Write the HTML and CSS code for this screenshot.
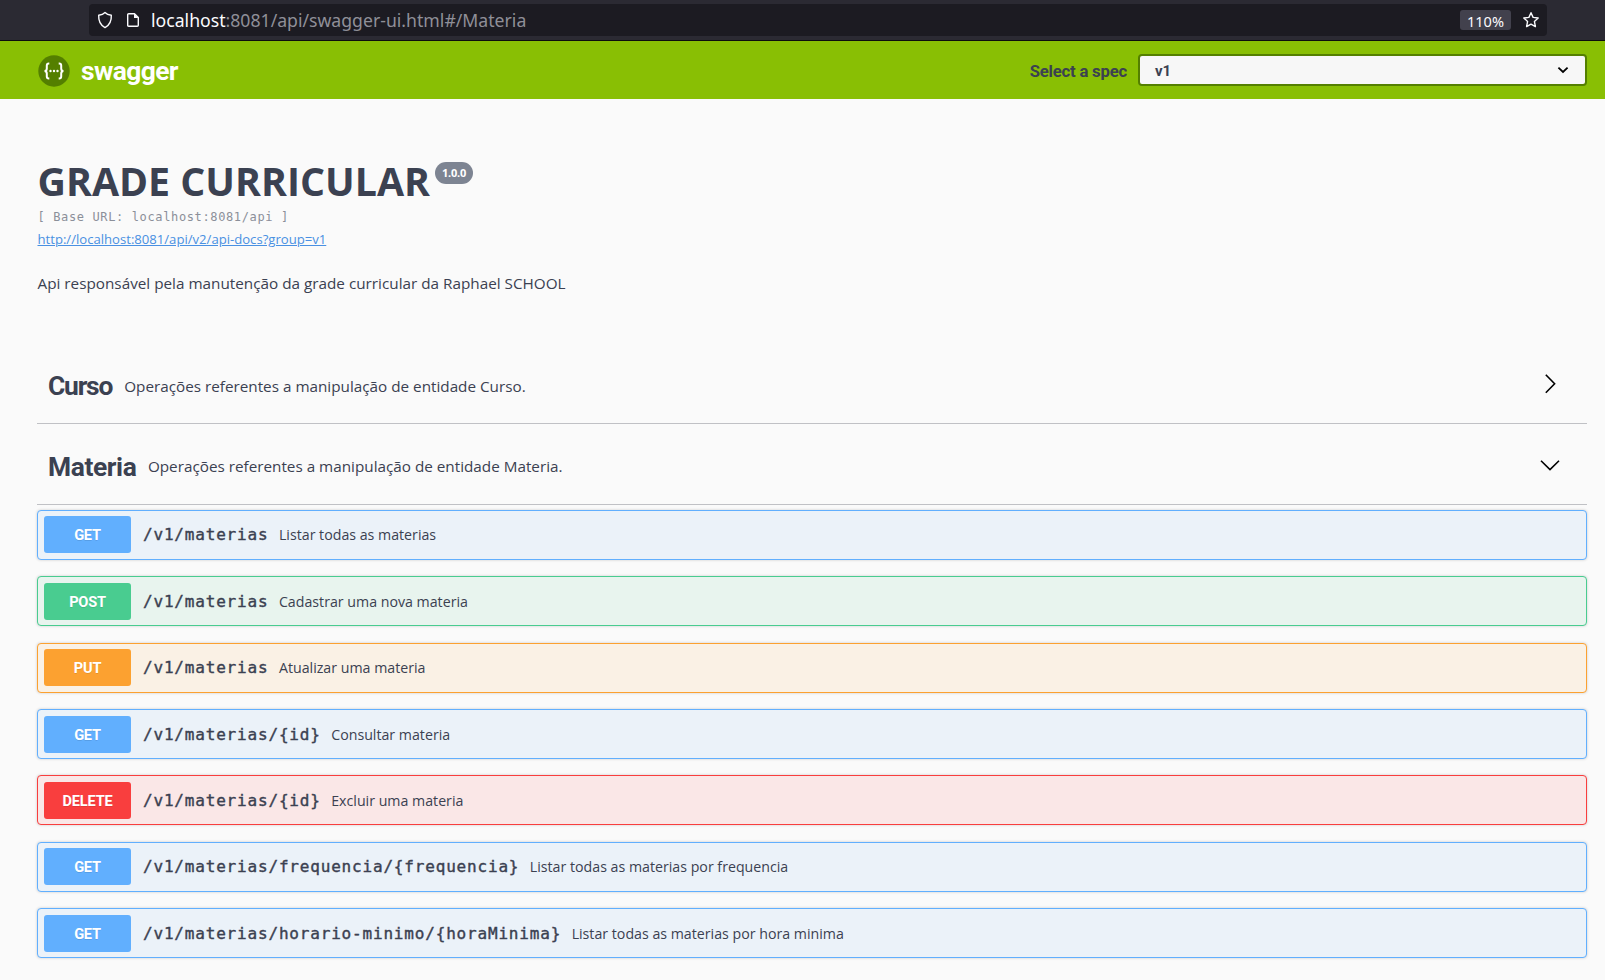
FILE: index.html
```html
<!DOCTYPE html>
<html lang="pt-BR">
<head>
<meta charset="utf-8">
<title>Swagger UI</title>
<link rel="stylesheet" href="styles.css">
</head>
<body>
<div class="chrome">
  <div class="urlbar">
    <svg class="shield" width="16" height="18" viewBox="0 0 16 18"><path d="M8 1.4C9.6 3 11.8 3.8 14.3 4.2c.3 5-1.300 9.600-6.300 12.400C3 13.800 1.400 9.200 1.700 4.200 4.200 3.800 6.400 3 8 1.400z"/></svg>
    <svg class="doc" width="14" height="16" viewBox="0 0 14 16"><path d="M2.700 1.700h5.800l3.800 3.800v7.800q0 1-1 1H2.700q-1 0-1-1V2.700q0-1 1-1z"/><path class="fold" d="M8 1.500V6h4.500z"/></svg>
    <span class="url"><b>localhost</b>:8081/api/swagger-ui.html#/Materia</span>
    <span class="zoom">110%</span>
    <svg class="star" width="18" height="18" viewBox="0 0 18 18"><path d="M9 1.700l2.100 4.700 5.100.6-3.800 3.400 1 5.200L9 13.100l-4.400 2.500 1-5.200L1.800 7l5.100-.6z"/></svg>
  </div>
</div>
<header class="topbar">
  <svg class="logo" width="32" height="32" viewBox="0 0 32 32"><circle cx="16" cy="16" r="15.700"/><path d="M11.300 8.500h-.5q-2 0-2 2v3q0 2.500-2.300 2.500 2.300 0 2.300 2.500v3q0 2 2 2h.5M20.700 8.500h.5q2 0 2 2v3q0 2.500 2.300 2.500-2.300 0-2.300 2.500v3q0 2-2 2h-.5"/><g><circle cx="12.500" cy="16" r="1.200"/><circle cx="16" cy="16" r="1.200"/><circle cx="19.500" cy="16" r="1.200"/></g></svg>
  <span class="brand">swagger</span>
  <span class="label">Select a spec</span>
  <div class="select"><span>v1</span><svg width="12" height="8" viewBox="0 0 12 8"><path d="M1.400 1.600L6 5.900l4.600-4.300"/></svg></div>
</header>
<main>
  <section class="info">
    <h1>GRADE CURRICULAR<span class="version">1.0.0</span></h1>
    <div class="base">[ Base URL: localhost:8081/api ]</div>
    <div class="link"><a href="#">http://localhost:8081/api/v2/api-docs?group=v1</a></div>
    <p>Api responsável pela manutenção da grade curricular da Raphael SCHOOL</p>
  </section>
  <section class="tag curso"><h2>Curso</h2><span>Operações referentes a manipulação de entidade Curso.</span><svg width="20" height="20" viewBox="0 0 20 20"><path d="M5.800.8L14.600 9.800 5.800 18.800"/></svg></section>
  <section class="tag materia"><h2>Materia</h2><span>Operações referentes a manipulação de entidade Materia.</span><svg width="20" height="20" viewBox="0 0 20 20"><path d="M1 5.800L10 14.600 19 5.800"/></svg></section>
  <div class="ops">
    <div class="op get"><b>GET</b><code>/v1/materias</code><span>Listar todas as materias</span></div>
    <div class="op post"><b>POST</b><code>/v1/materias</code><span>Cadastrar uma nova materia</span></div>
    <div class="op put"><b>PUT</b><code>/v1/materias</code><span>Atualizar uma materia</span></div>
    <div class="op get"><b>GET</b><code>/v1/materias/{id}</code><span>Consultar materia</span></div>
    <div class="op delete"><b>DELETE</b><code>/v1/materias/{id}</code><span>Excluir uma materia</span></div>
    <div class="op get"><b>GET</b><code>/v1/materias/frequencia/{frequencia}</code><span>Listar todas as materias por frequencia</span></div>
    <div class="op get"><b>GET</b><code>/v1/materias/horario-minimo/{horaMinima}</code><span>Listar todas as materias por hora minima</span></div>
  </div>
</main>
</body>
</html>
```
FILE: styles.css
```css
* { box-sizing: border-box; }
body { margin: 0; height: 980px; overflow: hidden; background: #fafafa; color: #3b4151; font-family: "Open Sans", sans-serif; }
svg { display: block; flex: none; fill: none; }
h1, h2, p { margin: 0; }

.chrome { height: 41px; padding: 4px 58px 0 89px; background: #2b2a33; border-bottom: 1px solid #0c0c0d; }
.urlbar { height: 32px; display: flex; align-items: center; padding: 0 7px 0 8px; border-radius: 4px; background: #1c1b22; color: #fbfbfe; }
.urlbar path { stroke: #fbfbfe; stroke-width: 1.4; stroke-linejoin: round; }
.urlbar .fold { fill: #fbfbfe; stroke: none; }
.doc { margin-left: 13px; }
.url { margin-left: 11px; font: 17.65px/32px "Noto Sans", sans-serif; color: #8f8f98; white-space: nowrap; }
.url b { font-weight: 400; color: #fbfbfe; }
.zoom { margin-left: auto; width: 51px; height: 20px; border-radius: 3px; background: #42414d; font: 14.5px/22px "Noto Sans", sans-serif; text-align: center; }
.star { margin-left: 11px; }

.topbar { height: 58px; display: flex; align-items: center; padding: 0 18px 0 38px; background: #89bf04; font-family: Roboto, sans-serif; font-weight: 700; }
.logo > circle { fill: #547f00; }
.logo path { stroke: #fff; stroke-width: 2; }
.logo g { fill: #fff; }
.logo { margin-top: 2px; }
.brand { margin: 2px 0 0 11px; font-size: 26.400px; letter-spacing: -.6px; line-height: 36px; color: #fff; }
.label { margin: 2px 0 0 auto; font-size: 16.700px; letter-spacing: -.2px; }
.select { display: flex; align-items: center; justify-content: space-between; width: 449px; height: 32px; margin-left: 11px; padding: 0 16px 0 15px; border: 2px solid #547f00; border-radius: 4px; background: #f7f7f7; font-size: 15px; }
.select span { padding-top: 1px; }
.select path { stroke: #000; stroke-width: 1.800; }

main { padding: 0 18px 0 37px; }
.info { height: 244px; padding: 55px 0 0 .5px; }
.info h1 { display: flex; align-items: flex-start; height: 54px; font-size: 39.3px; line-height: 54px; }
.version { width: 38px; height: 22px; margin: 8px 0 0 5px; border-radius: 11px; background: #7d8492; color: #fff; font-size: 11px; line-height: 22px; text-align: center; letter-spacing: -.2px; }
.base { height: 18px; font: 12px/18px "DejaVu Sans Mono", monospace; letter-spacing: .63px; color: #8b8f99; }
.link { margin-top: 4px; font-size: 13.12px; line-height: 18px; }
.link a { color: #4990e2; }
.info p { margin-top: 24px; font-size: 15.290px; line-height: 22px; }

.tag { height: 81px; display: flex; align-items: flex-start; padding: 24px 27px 0 11px; border-bottom: 1px solid #c0c1c5; }
.tag h2 { margin-top: 1px; font-family: Roboto, sans-serif; font-size: 26.4px; line-height: 36px; }
.curso h2 { letter-spacing: -1.2px; }
.materia h2 { letter-spacing: -.4px; }
.tag span { margin: 8px 0 0 12px; font-size: 15.280px; line-height: 22px; }
.materia span { margin: 7px 0 0 11.5px; }
.tag svg { margin: 7px 0 0 auto; }
.tag path { stroke: #000; stroke-width: 1.600; }

.ops { display: flex; flex-direction: column; gap: 16.360px; padding-top: 4.950px; }
.op { display: flex; align-items: center; height: 50px; padding: 0 6px; border: 1px solid; border-radius: 4px; box-shadow: 0 0 3px rgba(0,0,0,.19); }
.op b { width: 87px; height: 37px; border-radius: 3px; color: #fff; font-family: Roboto, sans-serif; font-size: 14.600px; letter-spacing: -.2px; line-height: 39px; text-align: center; text-shadow: 0 1px 0 rgba(0,0,0,.1); }
.op code { margin-left: 12px; font: 16px "DejaVu Sans Mono", monospace; letter-spacing: .82px; -webkit-text-stroke: .4px #3b4151; color: #3b4151; }
.op span { margin-left: 10.5px; font-size: 14.2px; color: #3b4151; }
.get { border-color: #61affe; background: #ebf2f9; } .get b { background: #61affe; }
.post { border-color: #49cc90; background: #e8f4ee; } .post b { background: #49cc90; }
.put { border-color: #fca130; background: #faf1e5; } .put b { background: #fca130; }
.delete { border-color: #f93e3e; background: #fae7e7; } .delete b { background: #f93e3e; }
```
